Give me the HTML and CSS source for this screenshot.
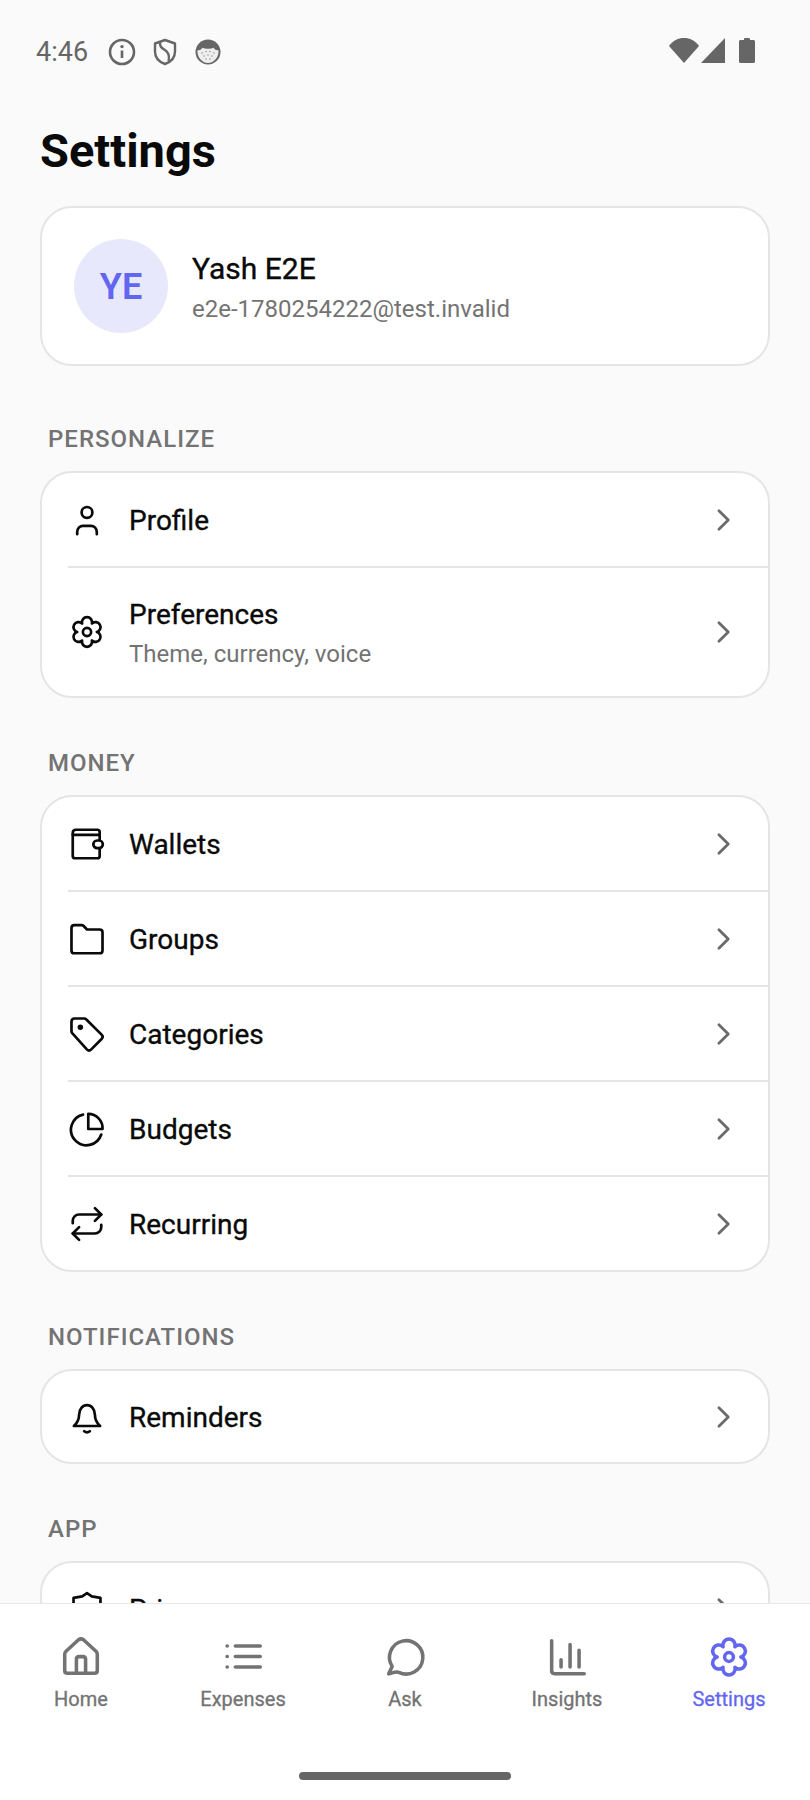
FILE: index.html
```html
<!DOCTYPE html>
<html lang="en">
<head>
  <meta charset="UTF-8">
  <meta name="viewport" content="width=device-width, initial-scale=1.0">
  <title>Settings</title>
  <link rel="stylesheet" href="styles.css">
</head>
<body>
  <div class="app">
    <div class="status-bar">
      <span class="status-time">4:46</span>
      <svg class="status-icon" viewBox="0 0 28 28" fill="none" stroke="#666" stroke-width="2.600">
        <circle cx="14" cy="14" r="12"/>
        <path d="M14 12.500v7.500"/>
        <circle cx="14" cy="8.600" r="1.700" fill="#666" stroke="none"/>
      </svg>
      <svg class="status-icon" viewBox="0 0 28 28" fill="none" stroke="#666" stroke-width="2.400" stroke-linejoin="round">
        <path d="M14 2l10 3.500v8c0 6-4 10.500-10 12.500C8 24 4 19.500 4 13.500v-8z"/>
        <path d="M9 4c-.5 5 2 6 5 8s5 5 3.500 11"/>
      </svg>
      <svg class="status-icon" viewBox="0 0 28 28">
        <circle cx="14" cy="14" r="12.500" fill="#666"/>
        <path d="M3.600 12c2.400.8 3.700-.8 5-2.200 3 1.300 7.800 1.300 10.800 0 1.300 1.400 2.600 3 5 2.200 1.100 6.500-4.400 13-10.400 13S2.500 18.500 3.600 12z" fill="#eee"/>
        <g fill="#999">
          <circle cx="8" cy="15" r=".8"/><circle cx="12" cy="13.500" r=".8"/><circle cx="16" cy="13.500" r=".8"/><circle cx="20" cy="15" r=".8"/>
          <circle cx="10" cy="18" r=".8"/><circle cx="14" cy="17" r=".8"/><circle cx="18" cy="18" r=".8"/><circle cx="12" cy="21" r=".8"/><circle cx="16" cy="21" r=".8"/>
        </g>
      </svg>
      <div class="status-right">
        <svg class="wifi" viewBox="0 0 30 25"><path d="M0 8C4 2.500 9 0 15 0s11 2.500 15 8L15 25z" fill="#666"/></svg>
        <svg class="signal" viewBox="0 0 24 25"><path d="M24 0v25H0z" fill="#666"/></svg>
        <svg class="battery" viewBox="0 0 16 25"><path d="M5 2V1.200C5 .5 5.500 0 6.200 0h3.600c.7 0 1.200.5 1.200 1.200V2h3.500c.8 0 1.500.7 1.500 1.500v20c0 .8-.7 1.500-1.500 1.500h-13C.7 25 0 24.300 0 23.500v-20C0 2.700.7 2 1.500 2z" fill="#666"/></svg>
      </div>
    </div>

    <main class="content">
      <h1>Settings</h1>

      <div class="card user-card">
        <div class="avatar">YE</div>
        <div class="user-info">
          <div class="user-name">Yash E2E</div>
          <div class="user-email">e2e-1780254222@test.invalid</div>
        </div>
      </div>

      <div class="section-label">PERSONALIZE</div>
      <div class="card">
        <div class="row">
          <svg class="row-icon" viewBox="0 0 24 24"><circle cx="12" cy="7.200" r="3.400"/><path d="M5.800 21v-1.500c0-2.100 1.600-3.800 3.700-3.800h5c2.100 0 3.700 1.700 3.700 3.800V21"/></svg>
          <div class="row-text"><div class="row-title">Profile</div></div>
          <svg class="chevron" viewBox="0 0 24 24"><path d="M8.500 4l8 8-8 8"/></svg>
        </div>
        <div class="row row-tall">
          <svg class="row-icon" viewBox="0 0 24 24"><circle cx="12" cy="12" r="2.600"/><path d="M8.900 6.630A3.200 3.200 0 1 1 15.100 6.630A3.200 3.200 0 1 1 18.200 12A3.200 3.200 0 1 1 15.100 17.370A3.200 3.200 0 1 1 8.900 17.370A3.200 3.200 0 1 1 5.800 12A3.200 3.200 0 1 1 8.900 6.630z"/></svg>
          <div class="row-text">
            <div class="row-title">Preferences</div>
            <div class="row-sub">Theme, currency, voice</div>
          </div>
          <svg class="chevron" viewBox="0 0 24 24"><path d="M8.500 4l8 8-8 8"/></svg>
        </div>
      </div>

      <div class="section-label">MONEY</div>
      <div class="card">
        <div class="row">
          <svg class="row-icon" viewBox="0 0 24 24"><path d="M20 9.500V4.500C20 3.600 19.400 3 18.500 3H5C3.800 3 3 3.900 3 5v14.500c0 .9.600 1.500 1.500 1.500h14c.9 0 1.500-.6 1.500-1.500V15"/><path d="M3 6.200h17"/><rect x="16" y="9.800" width="6" height="4.800" rx="2.400"/></svg>
          <div class="row-text"><div class="row-title">Wallets</div></div>
          <svg class="chevron" viewBox="0 0 24 24"><path d="M8.500 4l8 8-8 8"/></svg>
        </div>
        <div class="row">
          <svg class="row-icon" viewBox="0 0 24 24"><path d="M2.200 5c0-1 .7-1.800 1.800-1.800h4.500c.6 0 1 .2 1.400.6L12 6h8c1 0 1.800.8 1.800 1.800v11.400c0 1-.8 1.800-1.800 1.800H4c-1.100 0-1.800-.8-1.800-1.800z"/></svg>
          <div class="row-text"><div class="row-title">Groups</div></div>
          <svg class="chevron" viewBox="0 0 24 24"><path d="M8.500 4l8 8-8 8"/></svg>
        </div>
        <div class="row">
          <svg class="row-icon" viewBox="0 0 24 24"><path d="M2.200 4.200c0-1.200.8-2 2-2h6c.6 0 1 .2 1.400.6l9.600 9.600c.8.800.8 2 0 2.800l-6.500 6.500c-.8.800-2 .8-2.800 0L2.800 11.600c-.4-.4-.6-.8-.6-1.400z"/><circle cx="7.800" cy="7.800" r=".9" fill="#0a0a0a"/></svg>
          <div class="row-text"><div class="row-title">Categories</div></div>
          <svg class="chevron" viewBox="0 0 24 24"><path d="M8.500 4l8 8-8 8"/></svg>
        </div>
        <div class="row">
          <svg class="row-icon" viewBox="0 0 24 24"><path d="M21 15.500A9.800 9.800 0 1 1 9.500 2.900"/><path d="M12.800 2.500a9 9 0 0 1 9 9.500h-9z"/></svg>
          <div class="row-text"><div class="row-title">Budgets</div></div>
          <svg class="chevron" viewBox="0 0 24 24"><path d="M8.500 4l8 8-8 8"/></svg>
        </div>
        <div class="row">
          <svg class="row-icon" viewBox="0 0 24 24"><path d="M17 2l4 4-4 4"/><path d="M3 11.500V10c0-2.200 1.800-4 4-4h14"/><path d="M7 22l-4-4 4-4"/><path d="M21 12.500V14c0 2.200-1.800 4-4 4H3"/></svg>
          <div class="row-text"><div class="row-title">Recurring</div></div>
          <svg class="chevron" viewBox="0 0 24 24"><path d="M8.500 4l8 8-8 8"/></svg>
        </div>
      </div>

      <div class="section-label">NOTIFICATIONS</div>
      <div class="card">
        <div class="row">
          <svg class="row-icon" viewBox="0 0 24 24"><path d="M7 10.500a5 6 0 0 1 10 0c0 4 2 6 3.300 7.200H3.700C5 16.500 7 14.500 7 10.500z"/><path d="M10.200 21c1 .8 2.600.8 3.600 0"/></svg>
          <div class="row-text"><div class="row-title">Reminders</div></div>
          <svg class="chevron" viewBox="0 0 24 24"><path d="M8.500 4l8 8-8 8"/></svg>
        </div>
      </div>

      <div class="section-label">APP</div>
      <div class="card">
        <div class="row">
          <svg class="row-icon" viewBox="0 0 24 24"><path d="M12 2l3 2 5.500 1v7c0 5-3.500 8.500-8.500 10-5-1.500-8.500-5-8.500-10V5L9 4z"/></svg>
          <div class="row-text"><div class="row-title">Privacy</div></div>
          <svg class="chevron" viewBox="0 0 24 24"><path d="M8.500 4l8 8-8 8"/></svg>
        </div>
      </div>
    </main>

    <nav class="tabbar">
      <div class="tabs">
        <div class="tab">
          <svg viewBox="0 0 24 24"><path d="M3.500 10.500c0-.6.300-1.100.7-1.500l6.500-6c.8-.6 1.800-.6 2.600 0l6.500 6c.4.400.7.900.7 1.500V19c0 .9-.6 1.500-1.500 1.500H5c-.9 0-1.500-.6-1.500-1.500z"/><path d="M9.600 20.500v-7.200c0-.9.500-1.500 1.400-1.500h2c.9 0 1.400.6 1.400 1.500v7.200"/></svg>
          <span>Home</span>
        </div>
        <div class="tab">
          <svg viewBox="0 0 24 24"><path d="M8 6.300h13M8 11.700h13M8 17.200h13"/><path d="M3.700 6.300h.1M3.700 11.700h.1M3.700 17.200h.1"/></svg>
          <span>Expenses</span>
        </div>
        <div class="tab">
          <svg viewBox="0 0 24 24"><path d="M3.500 20.800l1.800-3.900A8.700 8.700 0 1 1 8.800 20c-1.800-.5-3.500.4-5.300.8z"/></svg>
          <span>Ask</span>
        </div>
        <div class="tab">
          <svg viewBox="0 0 24 24"><path d="M4 3.500v15.700c0 .9.600 1.500 1.500 1.500H21"/><path d="M8.900 13.500v3.700M13.600 5.500v11.700M18.300 8.500v8.700"/></svg>
          <span>Insights</span>
        </div>
        <div class="tab tab-active">
          <svg viewBox="0 0 24 24"><circle cx="12" cy="12" r="2.300"/><path d="M8.900 6.630A3.200 3.200 0 1 1 15.100 6.630A3.200 3.200 0 1 1 18.200 12A3.200 3.200 0 1 1 15.100 17.370A3.200 3.200 0 1 1 8.900 17.370A3.200 3.200 0 1 1 5.800 12A3.200 3.200 0 1 1 8.900 6.630z"/></svg>
          <span>Settings</span>
        </div>
      </div>
      <div class="home-indicator"></div>
    </nav>
  </div>
</body>
</html>
```

FILE: styles.css
```css
body {
  font-family: Roboto, "Liberation Sans", sans-serif;
  margin: 0;
  padding: 0;
  background-color: #fafafa;
  color: #0a0a0a;
}

.app {
  display: flex;
  flex-direction: column;
  height: 1800px;
  overflow: hidden;
}

/* Status bar */
.status-bar {
  flex: none;
  display: flex;
  align-items: center;
  height: 40px;
  padding: 32px 55px 0 36px;
}

.status-time {
  font-size: 27px;
  color: #666;
  margin-right: 20px;
}

.status-icon {
  width: 28px;
  height: 28px;
  margin-right: 15px;
}

.status-right {
  margin-left: auto;
  margin-bottom: 3px;
  display: flex;
  align-items: center;
}

.wifi {
  width: 30px;
  height: 25px;
  margin-right: 2px;
}

.signal {
  width: 24px;
  height: 25px;
  margin-right: 14px;
}

.battery {
  width: 16px;
  height: 25px;
}

/* Scrolling part */
.content {
  flex: 1;
  min-height: 0;
  overflow: hidden;
  padding: 0 40px;
}

h1 {
  font-size: 47px;
  font-weight: 700;
  line-height: 56px;
  margin: 51px 0 27px;
}

.card {
  background-color: white;
  border: 2px solid #e5e5e5;
  border-radius: 32px;
  overflow: hidden;
}

.user-card {
  display: flex;
  align-items: center;
  gap: 24px;
  height: 156px;
  padding-left: 32px;
  margin-bottom: 59px;
}

.avatar {
  box-sizing: border-box;
  width: 94px;
  height: 94px;
  padding-top: 2px;
  border-radius: 50%;
  background-color: #e7e8fc;
  color: #6366f1;
  font-size: 36px;
  font-weight: 600;
  display: flex;
  align-items: center;
  justify-content: center;
}

.user-info {
  padding-top: 3px;
}

.user-name {
  font-size: 30px;
  line-height: 36px;
  -webkit-text-stroke: 0.35px #0a0a0a;
}

.user-email {
  font-size: 24px;
  color: #737373;
  line-height: 30px;
  margin-top: 7px;
}

.section-label {
  font-size: 24px;
  font-weight: 500;
  color: #737373;
  letter-spacing: 1px;
  line-height: 28px;
  margin: 51px 0 18px 8px;
}

.row {
  display: flex;
  align-items: center;
  height: 93px;
  padding: 0 31px 0 26px;
}

.row + .row {
  border-top: 2px solid #e5e5e5;
  margin-left: 26px;
  padding-left: 0;
}

.row:only-child {
  height: 91px;
}

.row-tall {
  height: 128px;
}

.row-icon {
  flex: none;
  width: 38px;
  height: 38px;
  margin-right: 23px;
  fill: none;
  stroke: #0a0a0a;
  stroke-width: 1.700;
  stroke-linecap: round;
  stroke-linejoin: round;
}

.row-text {
  flex: 1;
  padding-top: 2px;
}

.row-title {
  font-size: 28px;
  line-height: 34px;
  -webkit-text-stroke: 0.35px #0a0a0a;
}

.row-sub {
  font-size: 24px;
  color: #737373;
  line-height: 30px;
  margin-top: 7px;
}

.chevron {
  flex: none;
  width: 28px;
  height: 28px;
  fill: none;
  stroke: #6b6b6b;
  stroke-width: 2.400;
  stroke-linecap: round;
  stroke-linejoin: round;
}

/* Bottom tabs */
.tabbar {
  flex: none;
  height: 196px;
  background-color: white;
  border-top: 1px solid #e8e8e8;
  display: flex;
  flex-direction: column;
  align-items: center;
}

.tabs {
  display: grid;
  grid-template-columns: repeat(5, 1fr);
  width: 100%;
  padding-top: 30px;
}

.tab {
  display: flex;
  flex-direction: column;
  align-items: center;
  color: #737373;
  font-size: 20px;
  line-height: 26px;
  -webkit-text-stroke: 0.3px #737373;
}

.tab svg {
  width: 46px;
  height: 46px;
  margin-bottom: 6px;
  fill: none;
  stroke: #737373;
  stroke-width: 1.850;
  stroke-linecap: round;
  stroke-linejoin: round;
}

.tab-active {
  color: #6366f1;
  -webkit-text-stroke-color: #6366f1;
}

.tab-active svg {
  stroke: #6366f1;
}

.home-indicator {
  width: 212px;
  height: 8px;
  border-radius: 4px;
  background-color: #666;
  margin-top: 60px;
}
```
